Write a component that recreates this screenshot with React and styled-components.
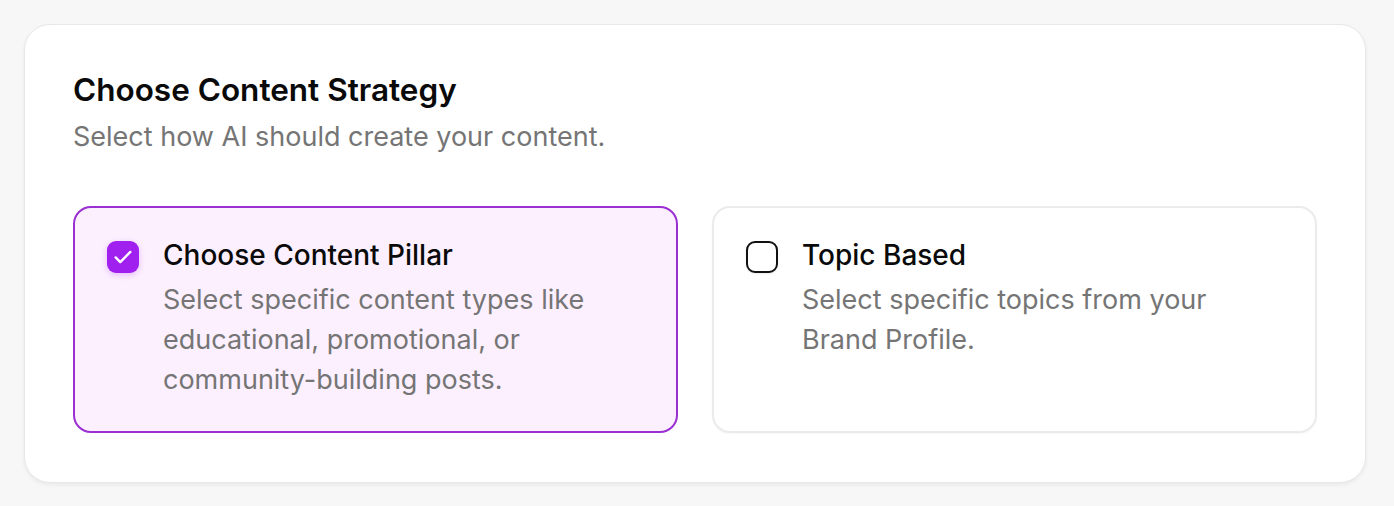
import React, { useState } from "react";
import styled, { createGlobalStyle } from "styled-components";

const Global = createGlobalStyle`
  html, body { margin: 0; padding: 0; background: #f7f7f7; }
  body { font-family: Inter, "Noto Sans", "Liberation Sans", sans-serif; -webkit-font-smoothing: antialiased; }
  * { box-sizing: border-box; }
`;

const Page = styled.div`
  padding: 24px 28px 22px 24px;
`;

const Card = styled.section`
  background: #ffffff;
  border: 1.5px solid #e8e8e8;
  border-radius: 26px;
  box-shadow: 0 2px 4px rgba(0, 0, 0, 0.06);
  padding: 46px 48px 49px 48px;
`;

const Title = styled.h2`
  margin: 0;
  font-size: 31.5px;
  line-height: 38px;
  font-weight: 600;
  color: #0a0a0a;
`;

const Subtitle = styled.p`
  margin: 10px 0 0;
  font-size: 27px;
  line-height: 36px;
  color: #757575;
`;

const Options = styled.div`
  margin-top: 51px;
  display: grid;
  grid-template-columns: 1fr 1fr;
  gap: 34px;
`;

const Option = styled.button`
  all: unset;
  box-sizing: border-box;
  cursor: pointer;
  display: flex;
  align-items: flex-start;
  gap: 24px;
  min-height: 227px;
  padding: 29px 32px 31px 32px;
  border-radius: 18px;
  border: ${(p) => (p.$active ? "2px solid #9a2fd2" : "2px solid #ebebeb")};
  background: ${(p) => (p.$active ? "#fcf0fe" : "#ffffff")};
  box-shadow: ${(p) => (p.$active ? "none" : "0 1px 2px rgba(0,0,0,0.04)")};
`;

const Box = styled.span`
  flex: none;
  box-sizing: border-box;
  width: 32px;
  height: 32px;
  margin-top: 4px;
  border-radius: 9px;
  display: flex;
  align-items: center;
  justify-content: center;
  background: ${(p) => (p.$checked ? "#a020f0" : "transparent")};
  border: ${(p) => (p.$checked ? "none" : "2.5px solid #111")};
  box-shadow: ${(p) => (p.$checked ? "0 2px 6px rgba(160, 32, 240, 0.25)" : "0 1px 2px rgba(0,0,0,0.08)")};
`;

const Body = styled.div`
  display: flex;
  flex-direction: column;
`;

const OptionTitle = styled.div`
  font-size: 28px;
  line-height: 36px;
  font-weight: 500;
  color: #0a0a0a;
`;

const OptionDesc = styled.div`
  margin-top: 7px;
  font-size: 27px;
  line-height: 40px;
  color: #757575;
`;

const Check = () => (
  <svg width="22" height="22" viewBox="0 0 24 24" fill="none" stroke="#fff" strokeWidth="2.6" strokeLinecap="round" strokeLinejoin="round">
    <path d="M4 12.5l5 5L20 6.5" />
  </svg>
);

export default function App() {
  const [sel, setSel] = useState("pillar");
  const opts = [
    {
      id: "pillar",
      title: "Choose Content Pillar",
      desc: ["Select specific content types like", "educational, promotional, or", "community-building posts."],
    },
    {
      id: "topic",
      title: "Topic Based",
      desc: ["Select specific topics from your", "Brand Profile."],
    },
  ];
  return (
    <>
      <Global />
      <Page>
        <Card>
          <Title>Choose Content Strategy</Title>
          <Subtitle>Select how AI should create your content.</Subtitle>
          <Options>
            {opts.map((o) => (
              <Option key={o.id} $active={sel === o.id} onClick={() => setSel(o.id)}>
                <Box $checked={sel === o.id}>{sel === o.id && <Check />}</Box>
                <Body>
                  <OptionTitle>{o.title}</OptionTitle>
                  <OptionDesc>
                    {o.desc.map((l, i) => (
                      <div key={i}>{l}</div>
                    ))}
                  </OptionDesc>
                </Body>
              </Option>
            ))}
          </Options>
        </Card>
      </Page>
    </>
  );
}
